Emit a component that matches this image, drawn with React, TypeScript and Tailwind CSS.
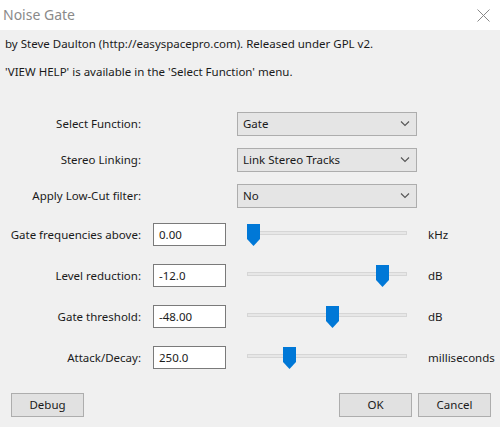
import React from 'react';

const font = { fontFamily: '"Noto Sans", "Segoe UI", sans-serif' };

const Chevron = () => (
  <svg width="10" height="6" viewBox="0 0 10 6" className="mr-[6px]">
    <path d="M1 0.5 L5 4.5 L9 0.5" fill="none" stroke="#555" strokeWidth="1.1" />
  </svg>
);

const Dropdown = ({ value }: { value: string }) => (
  <div className="flex h-[24px] w-[180px] items-center justify-between border border-[#adadad] bg-[#e5e5e5] pl-[5px]">
    <span>{value}</span>
    <Chevron />
  </div>
);

const Thumb = () => (
  <svg width="13" height="22" viewBox="0 0 13 22">
    <polygon points="0,0 13,0 13,15 6.5,22 0,15" fill="#0078d7" />
  </svg>
);

const Slider = ({ pos }: { pos: number }) => (
  <div className="relative h-[22px] w-[160px]">
    <div className="absolute left-0 right-0 top-[7px] h-[4px] border border-[#d6d6d6] bg-[#e7e7e7]" />
    <div className="absolute top-0" style={{ left: pos }}>
      <Thumb />
    </div>
  </div>
);

const SelectRow = ({ label, value }: { label: string; value: string }) => (
  <div className="flex h-[24px] items-center">
    <div className="w-[141px] text-right">{label}</div>
    <div className="ml-[96px]">
      <Dropdown value={value} />
    </div>
  </div>
);

const SliderRow = ({ label, value, pos, unit }: { label: string; value: string; pos: number; unit: string }) => (
  <div className="flex h-[23px] items-center">
    <div className="w-[141px] text-right">{label}</div>
    <div className="ml-[12px] flex h-[23px] w-[73px] items-center border border-[#7a7a7a] bg-white pl-[5px]">{value}</div>
    <div className="ml-[21px]">
      <Slider pos={pos} />
    </div>
    <div className="ml-[21px]">{unit}</div>
  </div>
);

const Button = ({ children }: { children: React.ReactNode }) => (
  <div className="flex h-[24px] w-[73px] items-center justify-center border border-[#adadad] bg-[#e1e1e1]">{children}</div>
);

export default function App() {
  return (
    <div className="h-[427px] w-[500px] overflow-hidden bg-[#f0f0f0] text-[11.5px] leading-[16px] text-[#1a1a1a]" style={font}>
      {/* Title bar */}
      <div className="flex h-[30px] items-center justify-between bg-white pl-[3px] pr-[10px]">
        <span className="text-[14px] text-[#8a8a8a]">Noise Gate</span>
        <svg width="13" height="13" viewBox="0 0 13 13">
          <path d="M0.5 0.5 L12.5 12.5 M12.5 0.5 L0.5 12.5" stroke="#888" strokeWidth="1" />
        </svg>
      </div>

      <div className="px-[5px] pt-[6px]">
        <div>by Steve Daulton (http://easyspacepro.com). Released under GPL v2.</div>
        <div className="mt-[12px]">'VIEW HELP' is available in the 'Select Function' menu.</div>
      </div>

      <div className="mt-[32px] flex flex-col gap-[12px]">
        <SelectRow label="Select Function:" value="Gate" />
        <SelectRow label="Stereo Linking:" value="Link Stereo Tracks" />
        <SelectRow label="Apply Low-Cut filter:" value="No" />
      </div>

      <div className="mt-[15px] flex flex-col gap-[18px]">
        <SliderRow label="Gate frequencies above:" value="0.00" pos={0} unit="kHz" />
        <SliderRow label="Level reduction:" value="-12.0" pos={129} unit="dB" />
        <SliderRow label="Gate threshold:" value="-48.00" pos={79} unit="dB" />
        <SliderRow label="Attack/Decay:" value="250.0" pos={36} unit="milliseconds" />
      </div>

      <div className="mt-[24px] flex items-center pl-[11px] pr-[9px]">
        <Button>Debug</Button>
        <div className="flex-1" />
        <Button>OK</Button>
        <div className="ml-[6px]">
          <Button>Cancel</Button>
        </div>
      </div>
    </div>
  );
}
